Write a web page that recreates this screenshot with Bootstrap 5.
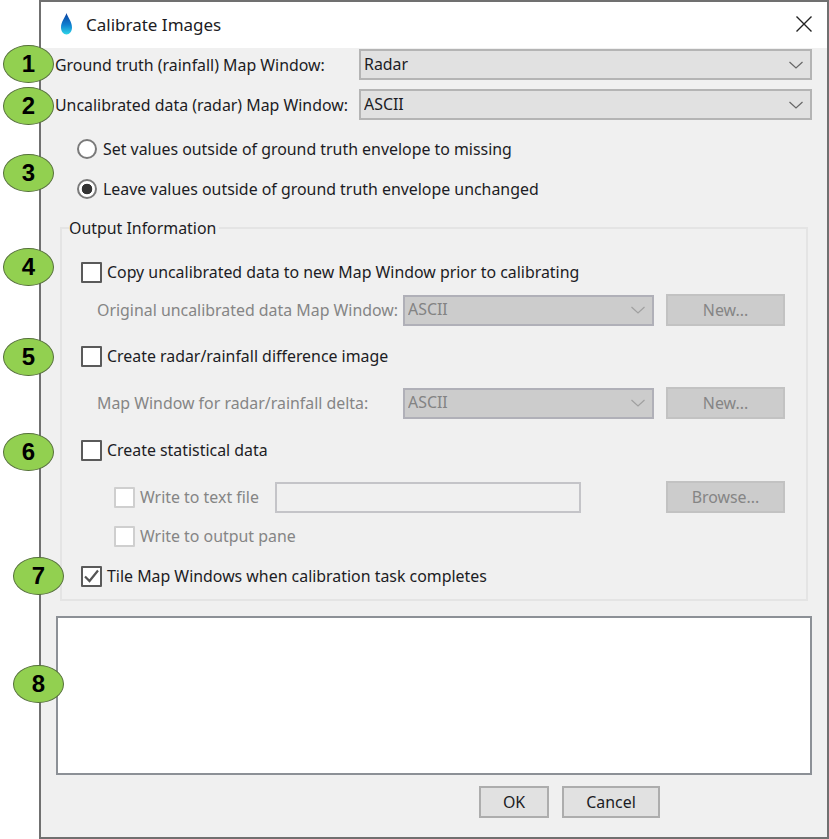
<!DOCTYPE html>
<html lang="en">
<head>
<meta charset="utf-8">
<title>Calibrate Images</title>
<link href="https://cdn.jsdelivr.net/npm/bootstrap@5.3.0/dist/css/bootstrap.min.css" rel="stylesheet">
<style>
html,body{height:839px;overflow:hidden;background:#fff}
body{position:relative;font-family:"Noto Sans","Open Sans",sans-serif;font-size:15.9px;line-height:20px;color:#1c1c24}
.dlg{margin-left:39px;width:790px;height:839px;border:2px solid #707070;background:#f0f0f0}
.dlg-title{height:46px;background:#fff;padding:0 14px 0 19px;gap:13px;font-size:17px}
.dlg-title svg{margin-bottom:2px}
.dlg-x{margin-left:auto}
.dlg-body{padding:1px 15px 0 14px}
.map-row{height:31px}
.map-row+.map-row{margin-top:9px}
.map-row label{width:304px;flex:none;white-space:nowrap}
.win-select.form-select{height:31px;padding:0 30px 0 3px;border:2px solid #b4b4b4;border-radius:0;background-color:#e1e1e1;background-size:16px 10px;background-position:right 6px center;color:#1c1c24;font-size:15.9px;box-shadow:none;background-image:url("data:image/svg+xml,%3csvg xmlns='http://www.w3.org/2000/svg' viewBox='0 0 16 10'%3e%3cpath fill='none' stroke='%23666' stroke-width='1.2' d='M1.5 2l6.5 6 6.500-6'/%3e%3c/svg%3e")}
.win-select.form-select:disabled{background-color:#cccccc;border-color:#b0b0b8;color:#838383;opacity:1;background-image:url("data:image/svg+xml,%3csvg xmlns='http://www.w3.org/2000/svg' viewBox='0 0 16 10'%3e%3cpath fill='none' stroke='%23a0a0a0' stroke-width='1.2' d='M1.5 2l6.5 6 6.500-6'/%3e%3c/svg%3e")}
.radio-group{padding:14px 0 0 22px}
.opt{display:flex;align-items:center;margin:0;min-height:30px;padding:0;white-space:nowrap}
.radio-group .opt+.opt{margin-top:10px}
.opt .form-check-input{float:none;margin:0;flex:none;box-shadow:none}
.opt input[type=radio]{width:20px;height:20px;margin-right:6px;border:2px solid #7a7a7a;background-color:#fff;background-image:none}
.opt input[type=radio]:checked{border-color:#7a7a7a;background-color:#fff;background-image:radial-gradient(circle,#333 0 5px,transparent 5.6px)}
.opt input[type=checkbox]{width:21px;height:21px;margin-right:5px;border:2px solid #5a5a5a;border-radius:1px;background-color:#fff}
.opt input[type=checkbox]:checked{border-color:#5a5a5a;background-color:#fff;background-size:17px 17px;background-image:url("data:image/svg+xml,%3csvg xmlns='http://www.w3.org/2000/svg' viewBox='0 0 17 17'%3e%3cpath fill='none' stroke='%23555' stroke-width='2.2' d='M2 8.500l4.500 4.500 8.500-10.500'/%3e%3c/svg%3e")}
.opt input[type=checkbox]:disabled{border-color:#cfcfcf;opacity:1}
.opt .form-check-input:disabled~span,.muted-text{color:#858585;opacity:1}
.out-box{margin:13px 4px 0 5px;height:384px;padding:0 21px 0 19px;border:2px solid #e4e4e4;min-width:0}
.out-box legend{float:none;width:auto;margin:0 0 0 -12px;padding:0 3px 0 0;font-size:15.9px;line-height:22px}
.sub-row{height:32px;margin-left:16px}
.sub-row .muted-text{width:306px;flex:none;white-space:nowrap}
.sub-row .win-select{width:251px;flex:none;margin-right:12px;height:31px}
.flat-btn.btn{width:119px;flex:none;height:32px;padding:0;border:2px solid #c2c2c2;border-radius:0;background:#cccccc;color:#858585;font-size:15.9px;line-height:20px;opacity:1}
.act-btn.btn{height:32px;padding:0;border:2px solid #adadad;border-radius:0;background:#e1e1e1;color:#1c1c24;font-size:15.9px;line-height:20px}
.ok-btn{width:70px}
.cancel-btn{width:98px}
.act-row{margin:11px 0 0 424px;gap:13px}
.path-field.form-control{width:306px;flex:none;height:31px;border:2px solid #c4c4c8;border-radius:0;background:#f0f0f0;padding:0;margin-right:85px}
.indent-opt{margin-left:33px}
.write-opt{width:161px;flex:none}
.note-area.form-control{display:block;width:756px;height:159px;margin:15px 0 0 1px;border:2px solid #8c9096;border-radius:0;background:#fff;box-shadow:none;resize:none}
.g-copy{margin-top:18px}.g-sub1{margin-top:7px}.g-diff{margin-top:15px}.g-sub2{margin-top:16px}.g-stat{margin-top:16px}.g-write{margin-top:16px}.g-pane{margin-top:8px}.g-tile{margin-top:10px}
.bubble{position:absolute;width:51px;height:38px;border:1px solid #55703a;border-radius:50%;background:#92d050;color:#000;font:700 24px/36px "Liberation Sans",Arial,sans-serif;text-align:center}
.b1{left:3px;top:45px}.b2{left:3px;top:87px}.b3{left:3px;top:154px}.b4{left:3px;top:248px}.b5{left:3px;top:338px}.b6{left:3px;top:433px}.b7{left:13px;top:557px}.b8{left:13px;top:665px}
</style>
</head>
<body>
<div class="dlg d-flex flex-column">
  <div class="dlg-title d-flex align-items-center">
    <svg width="13" height="22" viewBox="0 0 13 22" aria-hidden="true"><defs><linearGradient id="dropfill" x1="0" y1="0" x2="0" y2="1"><stop offset="0" stop-color="#0b3f9e"/><stop offset=".55" stop-color="#0f7fd0"/><stop offset="1" stop-color="#2fd6e8"/></linearGradient></defs><path fill="url(#dropfill)" d="M6.500 0C7.500 4 12 8.500 12 14.500c0 4-2.500 7-5.500 7S1 18.500 1 14.500C1 8.500 5.500 4 6.500 0z"/></svg>
    <span>Calibrate Images</span>
    <svg class="dlg-x" width="18" height="18" viewBox="0 0 18 18" aria-hidden="true"><path stroke="#222" stroke-width="1.400" d="M1.500 1.500l15 15M16.500 1.500l-15 15"/></svg>
  </div>
  <div class="dlg-body">
    <div class="map-row d-flex align-items-center"><label>Ground truth (rainfall) Map Window:</label><select class="form-select win-select"><option>Radar</option></select></div>
    <div class="map-row d-flex align-items-center"><label>Uncalibrated data (radar) Map Window:</label><select class="form-select win-select"><option>ASCII</option></select></div>
    <div class="radio-group">
      <label class="opt"><input class="form-check-input" type="radio" name="env"><span>Set values outside of ground truth envelope to missing</span></label>
      <label class="opt"><input class="form-check-input" type="radio" name="env" checked><span>Leave values outside of ground truth envelope unchanged</span></label>
    </div>
    <fieldset class="out-box">
      <legend>Output Information</legend>
      <label class="opt g-copy"><input class="form-check-input" type="checkbox"><span>Copy uncalibrated data to new Map Window prior to calibrating</span></label>
      <div class="sub-row d-flex align-items-center g-sub1"><span class="muted-text">Original uncalibrated data Map Window:</span><select class="form-select win-select" disabled><option>ASCII</option></select><button class="btn flat-btn" disabled>New...</button></div>
      <label class="opt g-diff"><input class="form-check-input" type="checkbox"><span>Create radar/rainfall difference image</span></label>
      <div class="sub-row d-flex align-items-center g-sub2"><span class="muted-text">Map Window for radar/rainfall delta:</span><select class="form-select win-select" disabled><option>ASCII</option></select><button class="btn flat-btn" disabled>New...</button></div>
      <label class="opt g-stat"><input class="form-check-input" type="checkbox"><span>Create statistical data</span></label>
      <div class="d-flex align-items-center g-write">
        <div class="indent-opt write-opt"><label class="opt"><input class="form-check-input" type="checkbox" disabled><span>Write to text file</span></label></div>
        <input class="form-control path-field" type="text" disabled>
        <button class="btn flat-btn" disabled>Browse...</button>
      </div>
      <label class="opt indent-opt g-pane"><input class="form-check-input" type="checkbox" disabled><span>Write to output pane</span></label>
      <label class="opt g-tile"><input class="form-check-input" type="checkbox" checked><span>Tile Map Windows when calibration task completes</span></label>
    </fieldset>
    <textarea class="form-control note-area"></textarea>
    <div class="act-row d-flex"><button class="btn act-btn ok-btn">OK</button><button class="btn act-btn cancel-btn">Cancel</button></div>
  </div>
</div>
<div class="bubble b1">1</div><div class="bubble b2">2</div><div class="bubble b3">3</div><div class="bubble b4">4</div>
<div class="bubble b5">5</div><div class="bubble b6">6</div><div class="bubble b7">7</div><div class="bubble b8">8</div>
<script src="https://cdn.jsdelivr.net/npm/bootstrap@5.3.0/dist/js/bootstrap.bundle.min.js"></script>
</body>
</html>
